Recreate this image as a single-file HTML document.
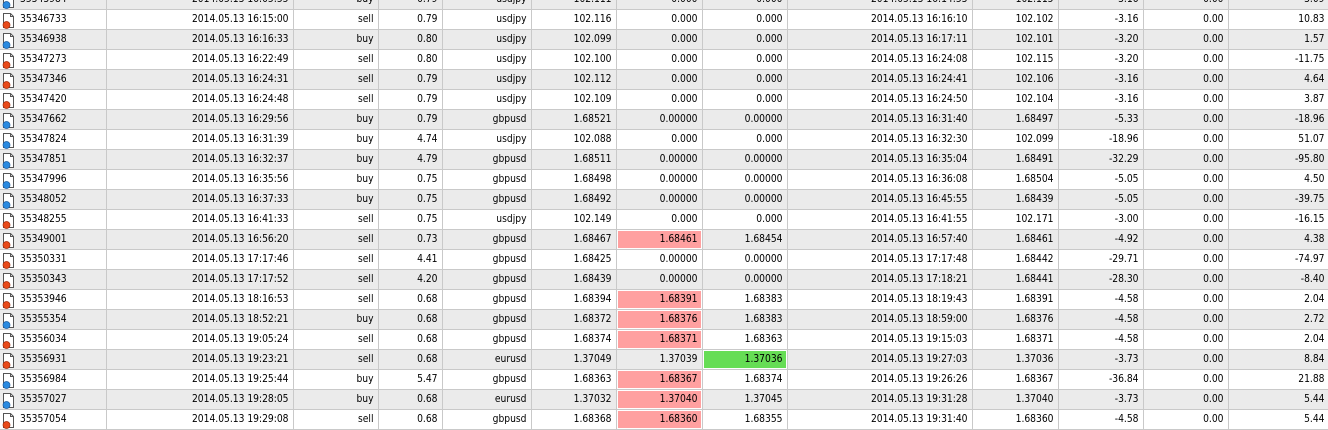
<!DOCTYPE html>
<html><head><meta charset="utf-8"><style>
html,body{margin:0;padding:0;background:#fff;overflow:hidden;width:1328px;height:428px}
table{position:absolute;left:0;top:-10px;border-collapse:collapse;table-layout:fixed;width:1329px;font-family:"DejaVu Sans Condensed","Liberation Sans",sans-serif;font-size:10.2px;color:#000}
td{height:19px;padding:0 4px 0 0;border:1px solid #c9c9c9;border-top:none;text-align:right;white-space:nowrap;overflow:hidden;line-height:19px}
tr:nth-child(odd) td{background:#ebebeb}
td:first-child{text-align:left;padding-left:20px;position:relative;border-left:none}
td.p{background:#ffa0a0!important;box-shadow:inset 0 0 0 1px #fff}
td.g{background:#66dd55!important;box-shadow:inset 0 0 0 1px #fff}
.i{position:absolute;left:1px;top:1px}
</style></head><body>
<svg width="0" height="0" style="position:absolute"><defs>
<g id="doc"><path d="M2.5 2.5h7l3 3v11h-10z" fill="#fff" stroke="#555"/><path d="M9.5 2.5v3h3" fill="none" stroke="#555"/></g>
</defs></svg>
<table>
<colgroup><col style="width:106px"><col style="width:187px"><col style="width:85px"><col style="width:64px"><col style="width:89px"><col style="width:85px"><col style="width:86px"><col style="width:85px"><col style="width:185px"><col style="width:86px"><col style="width:85px"><col style="width:85px"><col style="width:101px"></colgroup>
<tbody>
<tr><td><svg class="i" width="15" height="18"><use href="#doc"/><circle cx="5.5" cy="14" r="3.5" fill="#2a8ae0" stroke="#1a5aa0" stroke-width=".7"/></svg>35343984</td><td>2014.05.13 16:05:55</td><td>buy</td><td>0.79</td><td>usdjpy</td><td>102.111</td><td>0.000</td><td>0.000</td><td>2014.05.13 16:14:53</td><td>102.115</td><td>-3.16</td><td>0.00</td><td>3.09</td></tr>
<tr><td><svg class="i" width="15" height="18"><use href="#doc"/><circle cx="5.5" cy="14" r="3.5" fill="#e84a1a" stroke="#a02a0a" stroke-width=".7"/></svg>35346733</td><td>2014.05.13 16:15:00</td><td>sell</td><td>0.79</td><td>usdjpy</td><td>102.116</td><td>0.000</td><td>0.000</td><td>2014.05.13 16:16:10</td><td>102.102</td><td>-3.16</td><td>0.00</td><td>10.83</td></tr>
<tr><td><svg class="i" width="15" height="18"><use href="#doc"/><circle cx="5.5" cy="14" r="3.5" fill="#2a8ae0" stroke="#1a5aa0" stroke-width=".7"/></svg>35346938</td><td>2014.05.13 16:16:33</td><td>buy</td><td>0.80</td><td>usdjpy</td><td>102.099</td><td>0.000</td><td>0.000</td><td>2014.05.13 16:17:11</td><td>102.101</td><td>-3.20</td><td>0.00</td><td>1.57</td></tr>
<tr><td><svg class="i" width="15" height="18"><use href="#doc"/><circle cx="5.5" cy="14" r="3.5" fill="#e84a1a" stroke="#a02a0a" stroke-width=".7"/></svg>35347273</td><td>2014.05.13 16:22:49</td><td>sell</td><td>0.80</td><td>usdjpy</td><td>102.100</td><td>0.000</td><td>0.000</td><td>2014.05.13 16:24:08</td><td>102.115</td><td>-3.20</td><td>0.00</td><td>-11.75</td></tr>
<tr><td><svg class="i" width="15" height="18"><use href="#doc"/><circle cx="5.5" cy="14" r="3.5" fill="#e84a1a" stroke="#a02a0a" stroke-width=".7"/></svg>35347346</td><td>2014.05.13 16:24:31</td><td>sell</td><td>0.79</td><td>usdjpy</td><td>102.112</td><td>0.000</td><td>0.000</td><td>2014.05.13 16:24:41</td><td>102.106</td><td>-3.16</td><td>0.00</td><td>4.64</td></tr>
<tr><td><svg class="i" width="15" height="18"><use href="#doc"/><circle cx="5.5" cy="14" r="3.5" fill="#e84a1a" stroke="#a02a0a" stroke-width=".7"/></svg>35347420</td><td>2014.05.13 16:24:48</td><td>sell</td><td>0.79</td><td>usdjpy</td><td>102.109</td><td>0.000</td><td>0.000</td><td>2014.05.13 16:24:50</td><td>102.104</td><td>-3.16</td><td>0.00</td><td>3.87</td></tr>
<tr><td><svg class="i" width="15" height="18"><use href="#doc"/><circle cx="5.5" cy="14" r="3.5" fill="#2a8ae0" stroke="#1a5aa0" stroke-width=".7"/></svg>35347662</td><td>2014.05.13 16:29:56</td><td>buy</td><td>0.79</td><td>gbpusd</td><td>1.68521</td><td>0.00000</td><td>0.00000</td><td>2014.05.13 16:31:40</td><td>1.68497</td><td>-5.33</td><td>0.00</td><td>-18.96</td></tr>
<tr><td><svg class="i" width="15" height="18"><use href="#doc"/><circle cx="5.5" cy="14" r="3.5" fill="#2a8ae0" stroke="#1a5aa0" stroke-width=".7"/></svg>35347824</td><td>2014.05.13 16:31:39</td><td>buy</td><td>4.74</td><td>usdjpy</td><td>102.088</td><td>0.000</td><td>0.000</td><td>2014.05.13 16:32:30</td><td>102.099</td><td>-18.96</td><td>0.00</td><td>51.07</td></tr>
<tr><td><svg class="i" width="15" height="18"><use href="#doc"/><circle cx="5.5" cy="14" r="3.5" fill="#2a8ae0" stroke="#1a5aa0" stroke-width=".7"/></svg>35347851</td><td>2014.05.13 16:32:37</td><td>buy</td><td>4.79</td><td>gbpusd</td><td>1.68511</td><td>0.00000</td><td>0.00000</td><td>2014.05.13 16:35:04</td><td>1.68491</td><td>-32.29</td><td>0.00</td><td>-95.80</td></tr>
<tr><td><svg class="i" width="15" height="18"><use href="#doc"/><circle cx="5.5" cy="14" r="3.5" fill="#2a8ae0" stroke="#1a5aa0" stroke-width=".7"/></svg>35347996</td><td>2014.05.13 16:35:56</td><td>buy</td><td>0.75</td><td>gbpusd</td><td>1.68498</td><td>0.00000</td><td>0.00000</td><td>2014.05.13 16:36:08</td><td>1.68504</td><td>-5.05</td><td>0.00</td><td>4.50</td></tr>
<tr><td><svg class="i" width="15" height="18"><use href="#doc"/><circle cx="5.5" cy="14" r="3.5" fill="#2a8ae0" stroke="#1a5aa0" stroke-width=".7"/></svg>35348052</td><td>2014.05.13 16:37:33</td><td>buy</td><td>0.75</td><td>gbpusd</td><td>1.68492</td><td>0.00000</td><td>0.00000</td><td>2014.05.13 16:45:55</td><td>1.68439</td><td>-5.05</td><td>0.00</td><td>-39.75</td></tr>
<tr><td><svg class="i" width="15" height="18"><use href="#doc"/><circle cx="5.5" cy="14" r="3.5" fill="#e84a1a" stroke="#a02a0a" stroke-width=".7"/></svg>35348255</td><td>2014.05.13 16:41:33</td><td>sell</td><td>0.75</td><td>usdjpy</td><td>102.149</td><td>0.000</td><td>0.000</td><td>2014.05.13 16:41:55</td><td>102.171</td><td>-3.00</td><td>0.00</td><td>-16.15</td></tr>
<tr><td><svg class="i" width="15" height="18"><use href="#doc"/><circle cx="5.5" cy="14" r="3.5" fill="#e84a1a" stroke="#a02a0a" stroke-width=".7"/></svg>35349001</td><td>2014.05.13 16:56:20</td><td>sell</td><td>0.73</td><td>gbpusd</td><td>1.68467</td><td class="p">1.68461</td><td>1.68454</td><td>2014.05.13 16:57:40</td><td>1.68461</td><td>-4.92</td><td>0.00</td><td>4.38</td></tr>
<tr><td><svg class="i" width="15" height="18"><use href="#doc"/><circle cx="5.5" cy="14" r="3.5" fill="#e84a1a" stroke="#a02a0a" stroke-width=".7"/></svg>35350331</td><td>2014.05.13 17:17:46</td><td>sell</td><td>4.41</td><td>gbpusd</td><td>1.68425</td><td>0.00000</td><td>0.00000</td><td>2014.05.13 17:17:48</td><td>1.68442</td><td>-29.71</td><td>0.00</td><td>-74.97</td></tr>
<tr><td><svg class="i" width="15" height="18"><use href="#doc"/><circle cx="5.5" cy="14" r="3.5" fill="#e84a1a" stroke="#a02a0a" stroke-width=".7"/></svg>35350343</td><td>2014.05.13 17:17:52</td><td>sell</td><td>4.20</td><td>gbpusd</td><td>1.68439</td><td>0.00000</td><td>0.00000</td><td>2014.05.13 17:18:21</td><td>1.68441</td><td>-28.30</td><td>0.00</td><td>-8.40</td></tr>
<tr><td><svg class="i" width="15" height="18"><use href="#doc"/><circle cx="5.5" cy="14" r="3.5" fill="#e84a1a" stroke="#a02a0a" stroke-width=".7"/></svg>35353946</td><td>2014.05.13 18:16:53</td><td>sell</td><td>0.68</td><td>gbpusd</td><td>1.68394</td><td class="p">1.68391</td><td>1.68383</td><td>2014.05.13 18:19:43</td><td>1.68391</td><td>-4.58</td><td>0.00</td><td>2.04</td></tr>
<tr><td><svg class="i" width="15" height="18"><use href="#doc"/><circle cx="5.5" cy="14" r="3.5" fill="#2a8ae0" stroke="#1a5aa0" stroke-width=".7"/></svg>35355354</td><td>2014.05.13 18:52:21</td><td>buy</td><td>0.68</td><td>gbpusd</td><td>1.68372</td><td class="p">1.68376</td><td>1.68383</td><td>2014.05.13 18:59:00</td><td>1.68376</td><td>-4.58</td><td>0.00</td><td>2.72</td></tr>
<tr><td><svg class="i" width="15" height="18"><use href="#doc"/><circle cx="5.5" cy="14" r="3.5" fill="#e84a1a" stroke="#a02a0a" stroke-width=".7"/></svg>35356034</td><td>2014.05.13 19:05:24</td><td>sell</td><td>0.68</td><td>gbpusd</td><td>1.68374</td><td class="p">1.68371</td><td>1.68363</td><td>2014.05.13 19:15:03</td><td>1.68371</td><td>-4.58</td><td>0.00</td><td>2.04</td></tr>
<tr><td><svg class="i" width="15" height="18"><use href="#doc"/><circle cx="5.5" cy="14" r="3.5" fill="#e84a1a" stroke="#a02a0a" stroke-width=".7"/></svg>35356931</td><td>2014.05.13 19:23:21</td><td>sell</td><td>0.68</td><td>eurusd</td><td>1.37049</td><td>1.37039</td><td class="g">1.37036</td><td>2014.05.13 19:27:03</td><td>1.37036</td><td>-3.73</td><td>0.00</td><td>8.84</td></tr>
<tr><td><svg class="i" width="15" height="18"><use href="#doc"/><circle cx="5.5" cy="14" r="3.5" fill="#2a8ae0" stroke="#1a5aa0" stroke-width=".7"/></svg>35356984</td><td>2014.05.13 19:25:44</td><td>buy</td><td>5.47</td><td>gbpusd</td><td>1.68363</td><td class="p">1.68367</td><td>1.68374</td><td>2014.05.13 19:26:26</td><td>1.68367</td><td>-36.84</td><td>0.00</td><td>21.88</td></tr>
<tr><td><svg class="i" width="15" height="18"><use href="#doc"/><circle cx="5.5" cy="14" r="3.5" fill="#2a8ae0" stroke="#1a5aa0" stroke-width=".7"/></svg>35357027</td><td>2014.05.13 19:28:05</td><td>buy</td><td>0.68</td><td>eurusd</td><td>1.37032</td><td class="p">1.37040</td><td>1.37045</td><td>2014.05.13 19:31:28</td><td>1.37040</td><td>-3.73</td><td>0.00</td><td>5.44</td></tr>
<tr><td><svg class="i" width="15" height="18"><use href="#doc"/><circle cx="5.5" cy="14" r="3.5" fill="#e84a1a" stroke="#a02a0a" stroke-width=".7"/></svg>35357054</td><td>2014.05.13 19:29:08</td><td>sell</td><td>0.68</td><td>gbpusd</td><td>1.68368</td><td class="p">1.68360</td><td>1.68355</td><td>2014.05.13 19:31:40</td><td>1.68360</td><td>-4.58</td><td>0.00</td><td>5.44</td></tr>
</tbody></table>
</body></html>
